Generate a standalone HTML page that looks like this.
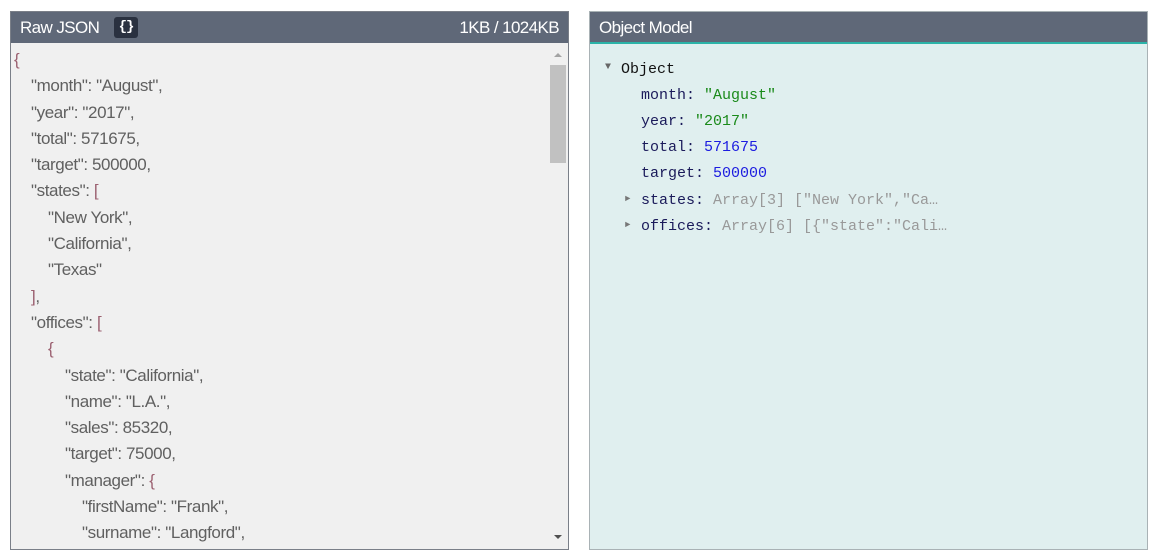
<!DOCTYPE html>
<html><head><style>
body{margin:0;width:1160px;height:560px;background:#fff;position:relative;overflow:hidden;font-family:"Liberation Sans",sans-serif}
.panel{position:absolute;top:11px;width:557px;height:537px;border:1px solid #7a7f88;}
.hdr{height:31px;background:#5f6878;color:#fff;font-size:17px;line-height:31px;padding-left:9px;letter-spacing:-0.6px;position:relative}
#l{left:10px;background:#f0f0f0}
#r{left:589px;background:#e0efef;border-color:#a9b2b5}
#r .hdr{border-bottom:2px solid #2bb3a8;height:30px}
.badge{position:absolute;left:103px;top:5px;width:24px;height:21px;background:#2a3140;border-radius:3px;color:#fff;font:bold 14px "Liberation Mono",monospace;text-align:center;line-height:21px;letter-spacing:-1px}
.sz{position:absolute;right:9px;top:0}
.code{position:absolute;left:3px;top:35px;font-size:17px;color:#606060;letter-spacing:-0.4px}
.code div{height:26.3px;line-height:26.3px;white-space:pre}
.i1{padding-left:17px}.i2{padding-left:34px}.i3{padding-left:51px}.i4{padding-left:68px}
.p{color:#9b6070}
.sb{position:absolute;left:538px;top:32px;width:18px;height:505px}
.thumb{position:absolute;left:1px;top:21px;width:16px;height:98px;background:#c1c1c1}
.tree{position:absolute;top:46px;font:15px "Liberation Mono",monospace;color:#1a1a5a;}
.tree div{position:absolute;white-space:pre;line-height:20px}
.s{color:#1a8a1a}.n{color:#1c1ce0}.g{color:#999}
</style></head><body>
<div class="panel" id="l">
<div class="hdr">Raw JSON<span class="badge">{}</span><span class="sz">1KB / 1024KB</span></div>
<div class="code">
<div class="p">{</div>
<div class="i1">"month": "August",</div>
<div class="i1">"year": "2017",</div>
<div class="i1">"total": 571675,</div>
<div class="i1">"target": 500000,</div>
<div class="i1">"states": <span class="p">[</span></div>
<div class="i2">"New York",</div>
<div class="i2">"California",</div>
<div class="i2">"Texas"</div>
<div class="i1"><span class="p">]</span>,</div>
<div class="i1">"offices": <span class="p">[</span></div>
<div class="i2"><span class="p">{</span></div>
<div class="i3">"state": "California",</div>
<div class="i3">"name": "L.A.",</div>
<div class="i3">"sales": 85320,</div>
<div class="i3">"target": 75000,</div>
<div class="i3">"manager": <span class="p">{</span></div>
<div class="i4">"firstName": "Frank",</div>
<div class="i4">"surname": "Langford",</div>
</div>
<div class="sb">
<div style="position:absolute;left:5px;top:9px;width:0;height:0;border-left:4px solid transparent;border-right:4px solid transparent;border-bottom:4px solid #a3a3a3"></div>
<div class="thumb"></div>
<div style="position:absolute;left:5px;top:491px;width:0;height:0;border-left:4px solid transparent;border-right:4px solid transparent;border-top:4px solid #505050"></div>
</div>
</div>
<div class="panel" id="r">
<div class="hdr">Object Model</div>
<div class="tree">
<div style="left:15px;top:0;font-size:10px;color:#666">▼</div>
<div style="left:31px;top:2px;color:#111">Object</div>
<div style="left:51px;top:28px">month: <span class="s">"August"</span></div>
<div style="left:51px;top:54px">year: <span class="s">"2017"</span></div>
<div style="left:51px;top:80px">total: <span class="n">571675</span></div>
<div style="left:51px;top:106px">target: <span class="n">500000</span></div>
<div style="left:35px;top:131px;font-size:9px;color:#777">►</div>
<div style="left:51px;top:133px">states: <span class="g">Array[3] ["New York","Ca…</span></div>
<div style="left:35px;top:157px;font-size:9px;color:#777">►</div>
<div style="left:51px;top:159px">offices: <span class="g">Array[6] [{"state":"Cali…</span></div>
</div>
</div>
</body></html>
